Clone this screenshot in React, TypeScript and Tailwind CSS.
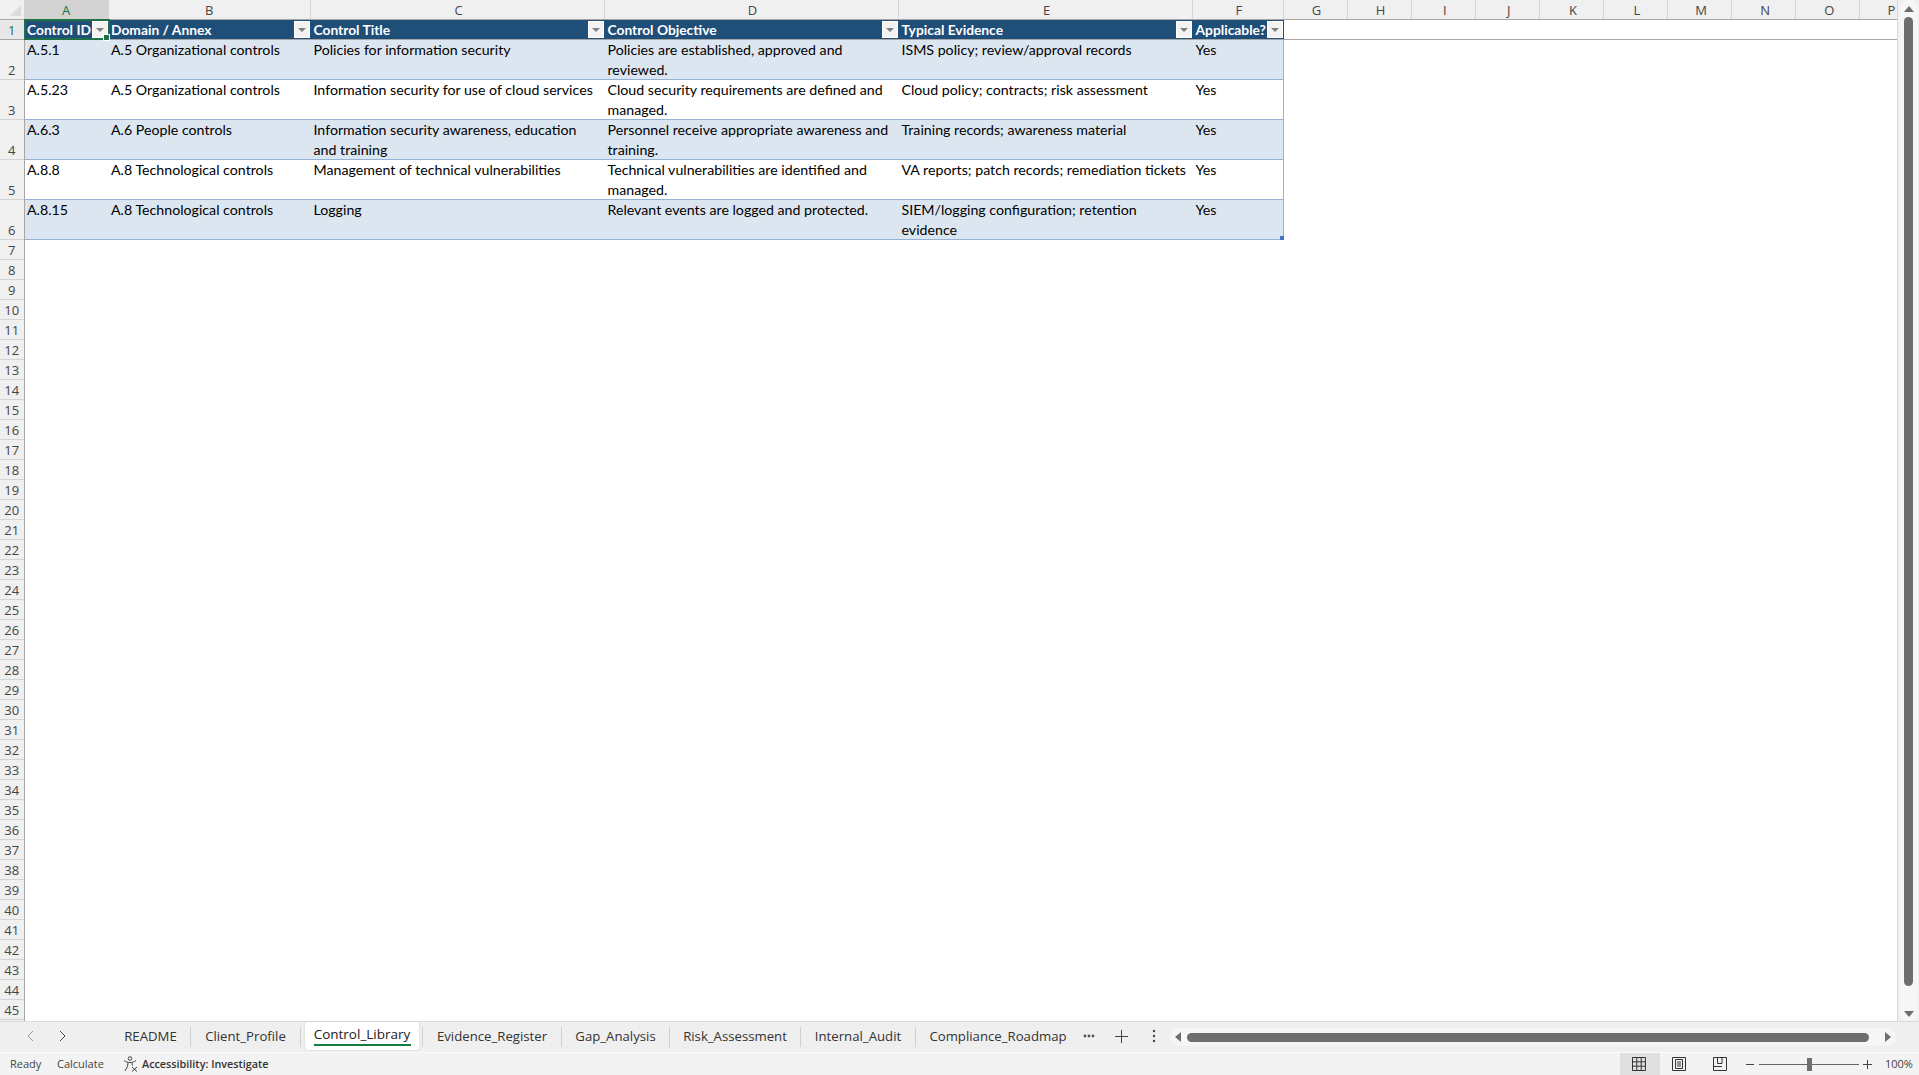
import React from "react";

const cols = ["A", "B", "C", "D", "E", "F"];
const blanks = ["G", "H", "I", "J", "K", "L", "M", "N", "O"];

const headers = ["Control ID", "Domain / Annex", "Control Title", "Control Objective", "Typical Evidence", "Applicable?"];
const rows = [
  ["A.5.1", "A.5 Organizational controls", "Policies for information security", "Policies are established, approved and\nreviewed.", "ISMS policy; review/approval records", "Yes"],
  ["A.5.23", "A.5 Organizational controls", "Information security for use of cloud services", "Cloud security requirements are defined and\nmanaged.", "Cloud policy; contracts; risk assessment", "Yes"],
  ["A.6.3", "A.6 People controls", "Information security awareness, education\nand training", "Personnel receive appropriate awareness and\ntraining.", "Training records; awareness material", "Yes"],
  ["A.8.8", "A.8 Technological controls", "Management of technical vulnerabilities", "Technical vulnerabilities are identified and\nmanaged.", "VA reports; patch records; remediation tickets", "Yes"],
  ["A.8.15", "A.8 Technological controls", "Logging", "Relevant events are logged and protected.", "SIEM/logging configuration; retention\nevidence", "Yes"],
];
const widths = ["w-[84px]", "w-[202.5px]", "w-[294px]", "w-[294px]", "w-[294px]", "w-[90.5px]"];

const tabs = [
  { n: "README", w: "w-[80px]" },
  { n: "Client_Profile", w: "w-[110px]" },
  { n: "Evidence_Register", w: "w-[139px]" },
  { n: "Gap_Analysis", w: "w-[108px]" },
  { n: "Risk_Assessment", w: "w-[131px]" },
  { n: "Internal_Audit", w: "w-[115px]" },
];

function Tab({ n, w }: { n: string; w: string }) {
  return <div className={`${w} h-[20px] flex items-center justify-center border-r border-[#d0d0d0] text-[13.2px] text-[#333]`}>{n}</div>;
}

function Filter() {
  return (
    <div className="w-[16px] h-[17px] mr-[1px] shrink-0 bg-[#f2f2f2] border border-white flex items-center justify-center">
      <div className="w-0 h-0 border-l-[4px] border-r-[4px] border-t-[4px] border-l-transparent border-r-transparent border-t-[#808080]" />
    </div>
  );
}

export default function App() {
  const rowNums = Array.from({ length: 39 }, (_, i) => i + 7);
  return (
    <div className="w-[1919px] h-[1075px] overflow-hidden bg-[#f0f0f0] flex flex-col font-['Lato','Liberation_Sans',sans-serif]">
      <div className="h-[1021px] flex shrink-0">
        <div className="w-[1898px] shrink-0 bg-white overflow-hidden border-r border-[#d9d9d9] flex flex-col">
          {/* column letters */}
          <div className="h-[20px] flex shrink-0 bg-[#f0f0f0] border-b border-[#a6a6a6] text-[13px] text-[#444] font-['Open_Sans',sans-serif]">
            <div className="w-[24.5px] shrink-0 border-r border-[#d4d4d4] flex items-end justify-end pr-[3px] pb-[3px]">
              <div className="w-0 h-0 border-l-[11px] border-b-[11px] border-l-transparent border-b-[#dcdcdc]" />
            </div>
            {cols.map((c, i) => (
              <div key={c} className={`${widths[i]} shrink-0 flex items-center justify-center pt-[2px] border-r border-[#d4d4d4] ${i === 0 ? "bg-[#d2d2d2] text-[#217346]" : ""} ${i > 1 ? "pl-[2px]" : ""}`}>{c}</div>
            ))}
            {blanks.map((b) => (
              <div key={b} className="w-[64.1px] shrink-0 flex items-center justify-center pt-[2px] pl-[3px] border-r border-[#d4d4d4]">{b}</div>
            ))}
            <div className="w-[36px] shrink-0 flex items-center justify-center pl-[26px] pt-[2px]">P</div>
          </div>

          <div className="flex flex-1 min-h-0">
            {/* row numbers */}
            <div className="w-[24.5px] shrink-0 bg-[#f0f0f0] border-r border-[#a6a6a6] text-[13px] text-[#444] font-['Open_Sans',sans-serif] text-center">
              <div className="h-[20px] flex items-center justify-center pt-[2px] bg-[#e8e8e8] text-[#217346] border-b border-[#a6a6a6]">1</div>
              {[2, 3, 4, 5, 6].map((n) => (
                <div key={n} className="h-[40px] flex items-end justify-center border-b border-[#d4d4d4]">
                  <span className="translate-y-[1px]">{n}</span>
                </div>
              ))}
              {rowNums.map((n) => (
                <div key={n} className="h-[20px] flex items-center justify-center pt-[2px] border-b border-[#d4d4d4]">{n}</div>
              ))}
            </div>

            {/* sheet */}
            <div className="flex-1 min-w-0 flex flex-col text-[14.2px] text-black">
              <div className="h-[20px] flex border-b border-[#a6a6a6]">
                {headers.map((h, i) => (
                  <div key={h} className={`${widths[i]} shrink-0 relative bg-[#1f4e78] flex items-center`}>
                    <div className="flex-1 min-w-0 overflow-hidden whitespace-nowrap pl-[2.5px] pt-[1px] font-bold text-white text-[13.8px] leading-[18px]">{h}</div>
                    <Filter />
                    {i === 0 && (
                      <div className="absolute -left-[1px] -top-[1px] -right-[1px] -bottom-[1px] z-10 border-2 border-[#1f7145]">
                        <div className="absolute -right-[2px] -bottom-[3px] w-[5px] h-[5px] bg-[#1f7145] border border-white box-content" />
                      </div>
                    )}
                  </div>
                ))}
              </div>
              <div className="relative w-[1259px]">
                {rows.map((r, ri) => (
                  <div key={r[0]} className={`h-[40px] flex border-b border-[#95b3d7] ${ri % 2 === 0 ? "bg-[#dce6f1]" : "bg-white"}`}>
                    {r.map((c, ci) => (
                      <div key={ci} className={`${widths[ci]} shrink-0 pl-[2.5px] whitespace-pre leading-[20px] ${ci === 5 ? "border-r border-[#95b3d7]" : ""}`}>{c}</div>
                    ))}
                  </div>
                ))}
                <div className="absolute right-0 bottom-0 w-[4px] h-[4px] bg-[#4472c4]" />
              </div>
            </div>
          </div>
        </div>

        {/* vertical scrollbar */}
        <div className="flex-1 flex justify-center bg-[#f0f0f0]">
          <div className="w-[18px] h-full rounded-full bg-[#f6f6f6] flex flex-col items-center">
            <div className="mt-[6px] w-0 h-0 border-l-[5px] border-r-[5px] border-b-[6px] border-l-transparent border-r-transparent border-b-[#6e6e6e]" />
            <div className="mt-[5px] w-[9px] h-[969px] rounded-full bg-[#6e6e6e]" />
            <div className="mt-[25px] w-0 h-0 border-l-[5px] border-r-[5px] border-t-[6px] border-l-transparent border-r-transparent border-t-[#6e6e6e]" />
          </div>
        </div>
      </div>

      {/* tab bar */}
      <div className="h-[32px] shrink-0 flex bg-[#efefef] border-t border-[#dcdcdc] border-b border-b-[#fafafa] font-['Open_Sans',sans-serif]">
        <div className="w-[111px] shrink-0 flex items-center pl-[26px] gap-[23px] text-[#888] pb-[2px]">
          <svg width="9" height="12" viewBox="0 0 9 12" fill="none" stroke="#9a9a9a" strokeWidth="1"><path d="M7 1L2 6l5 5" /></svg>
          <svg width="9" height="12" viewBox="0 0 9 12" fill="none" stroke="#444" strokeWidth="1"><path d="M2 1l5 5-5 5" /></svg>
        </div>
        <div className="flex items-center">
          <Tab {...tabs[0]} />
          <Tab {...tabs[1]} />
        </div>
        <div className="ml-[4px] w-[114px] h-[28px] bg-white rounded-b-[4px] rounded-t-[2px] flex flex-col items-center pt-[2px] shadow-[0_0_2px_rgba(0,0,0,0.15)]">
          <span className="text-[13.5px] text-[#222] leading-[20px] font-medium">Control_Library</span>
          <div className="w-[97px] h-[2px] bg-[#107c41]" />
        </div>
        <div className="flex items-center ml-[3px]">
          <div className="w-[1px] h-[20px] bg-[#d0d0d0]" />
          <Tab {...tabs[2]} />
          <Tab {...tabs[3]} />
          <Tab {...tabs[4]} />
          <Tab {...tabs[5]} />
          <div className="w-[164px] h-[20px] flex items-center justify-center text-[13.2px] text-[#333]">Compliance_Roadmap</div>
        </div>
        <div className="flex items-center pb-[2px] text-[#444] shrink-0">
          <svg className="ml-[3px]" width="12" height="4" viewBox="0 0 12 4" fill="#555"><circle cx="2" cy="2" r="1.4" /><circle cx="6" cy="2" r="1.4" /><circle cx="10" cy="2" r="1.4" /></svg>
          <svg className="ml-[20px]" width="13" height="13" viewBox="0 0 13 13" stroke="#444" strokeWidth="1"><path d="M6.5 0v13M0 6.5h13" /></svg>
          <svg className="ml-[24px]" width="4" height="14" viewBox="0 0 4 14" fill="#444"><circle cx="2" cy="2" r="1.2" /><circle cx="2" cy="7" r="1.2" /><circle cx="2" cy="12" r="1.2" /></svg>
        </div>
        <div className="ml-[14px] w-[726px] h-[18px] mt-[6px] rounded-full bg-[#f6f6f6] flex items-center">
          <div className="ml-[5px] w-0 h-0 border-t-[5px] border-b-[5px] border-r-[6px] border-t-transparent border-b-transparent border-r-[#6e6e6e]" />
          <div className="ml-[6px] w-[682px] h-[9px] rounded-full bg-[#6e6e6e]" />
          <div className="ml-[16px] w-0 h-0 border-t-[5px] border-b-[5px] border-l-[6px] border-t-transparent border-b-transparent border-l-[#6e6e6e]" />
        </div>
      </div>

      {/* status bar */}
      <div className="h-[22px] shrink-0 bg-[#f3f3f3] flex items-center text-[11px] text-[#444] font-['Open_Sans',sans-serif]">
        <span className="ml-[10px] w-[47px]">Ready</span>
        <span className="w-[66px]">Calculate</span>
        <svg width="16" height="16" viewBox="0 0 16 16" fill="none" stroke="#444" strokeWidth="1">
          <circle cx="7" cy="2.5" r="1.8" />
          <path d="M1 4.5c2 1.5 3.500 2 6 2s4-.5 6-2M5 7l-.5 3.500L2 15M9 7l.5 2.500M9 11l5 4.500M14 11l-5 4.500" />
        </svg>
        <span className="ml-[3px] text-[10.8px] font-semibold text-[#333]">Accessibility: Investigate</span>
        <div className="ml-auto h-full flex items-center">
          <div className="w-[40px] pr-[3px] h-full bg-[#e0e0e0] flex items-center justify-center">
            <svg width="14" height="14" viewBox="0 0 14 14" fill="none" stroke="#333" strokeWidth="1"><path d="M.5.5h13v13H.5zM.5 4.800h13M.5 9.200h13M4.800.5v13M9.200.5v13" /></svg>
          </div>
          <div className="w-[40px] pr-[2px] h-full flex items-center justify-center">
            <svg width="14" height="14" viewBox="0 0 14 14" fill="none" stroke="#333" strokeWidth="1"><path d="M.5.5h13v13H.5zM3.500 2.500h7v9h-7zM5 5h4M5 7h4M5 9h4" /></svg>
          </div>
          <div className="w-[40px] pr-[1px] h-full flex items-center justify-center">
            <svg width="14" height="14" viewBox="0 0 14 14" fill="none" stroke="#333" strokeWidth="1"><path d="M.5.5h13v13H.5zM4.500.5v6h4.500v-6M.5 9.500h8.500" /></svg>
          </div>
          <div className="ml-[6px] w-[8px] h-[1px] bg-[#444]" />
          <div className="ml-[5px] w-[100px] h-[1px] bg-[#666] flex items-center justify-center">
            <div className="w-[5px] h-[13px] shrink-0 bg-[#6e6e6e]" />
          </div>
          <svg className="ml-[4px]" width="9" height="9" viewBox="0 0 9 9" stroke="#444" strokeWidth="1"><path d="M4.500 0v9M0 4.500h9" /></svg>
          <span className="ml-[13px] w-[34px]">100%</span>
        </div>
      </div>
    </div>
  );
}
